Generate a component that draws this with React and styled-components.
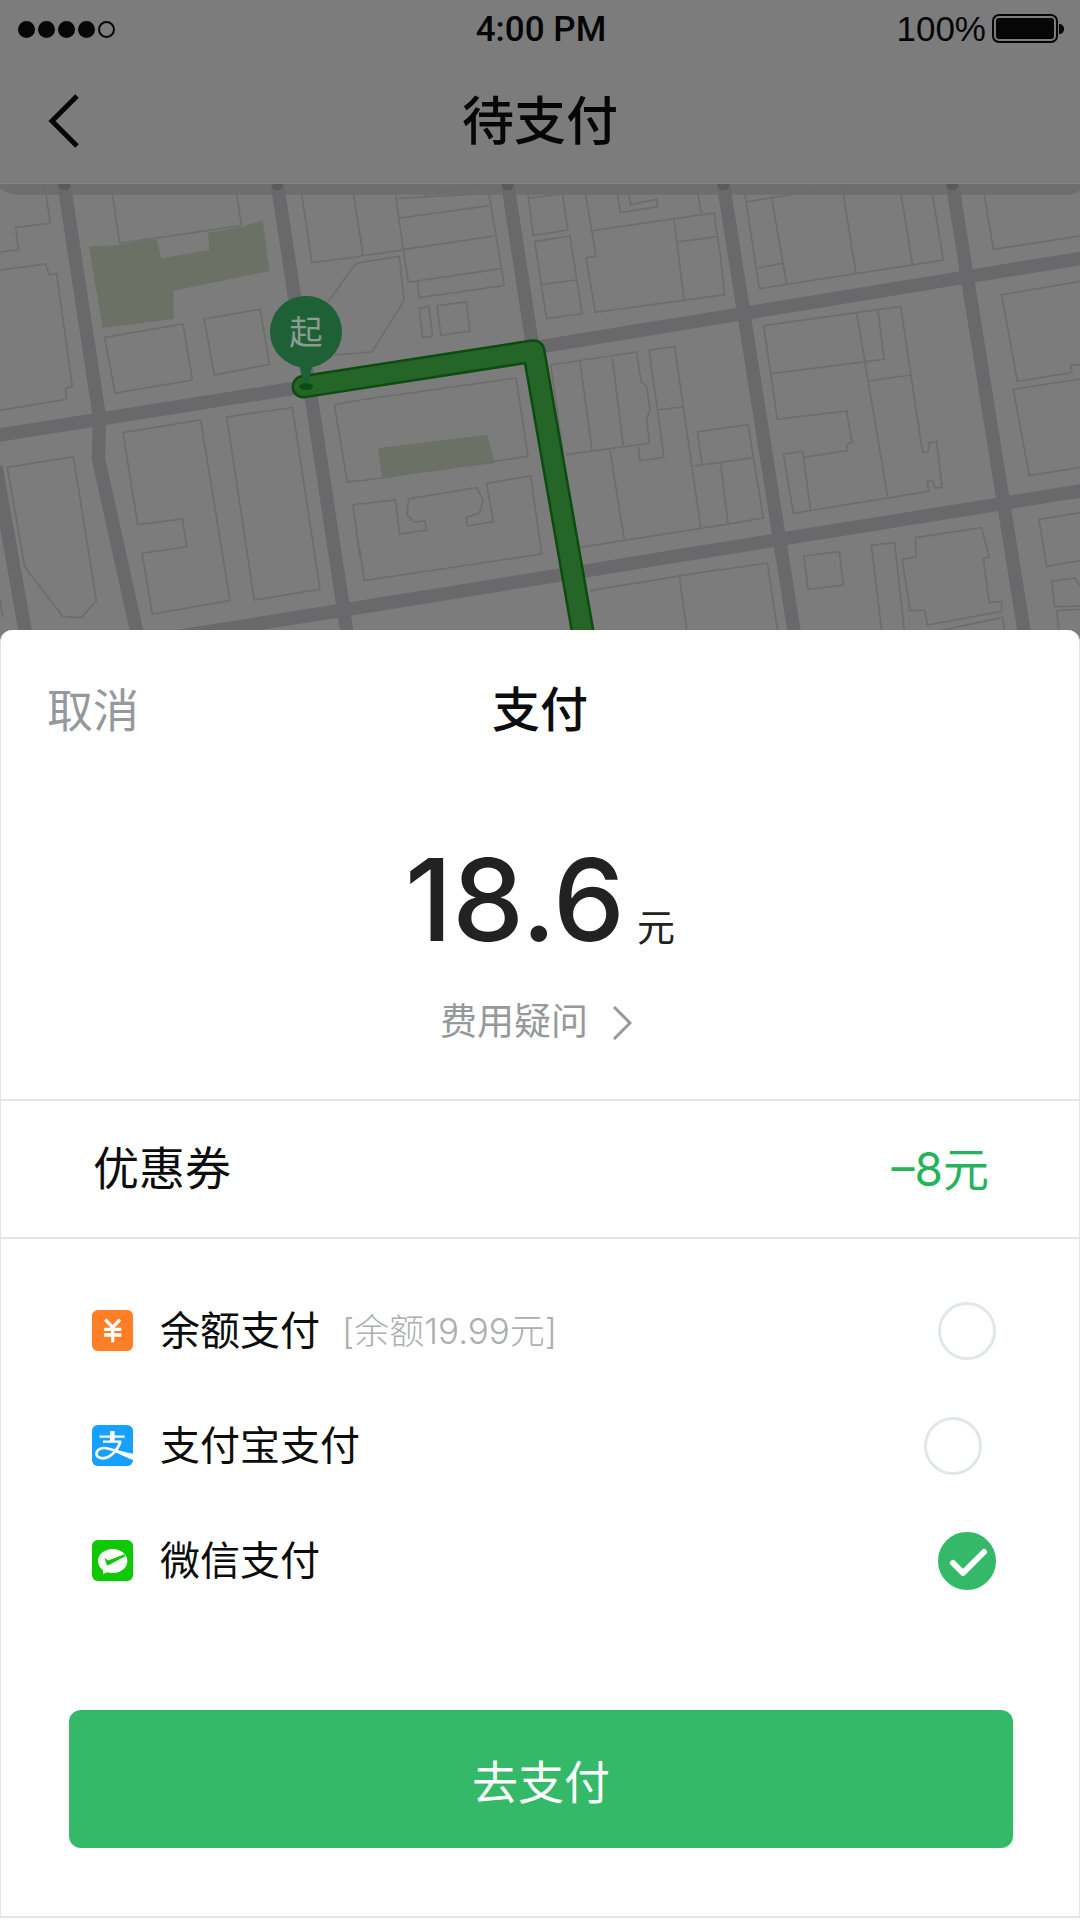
import * as React from "react"
import styled, { createGlobalStyle, ThemeProvider } from "styled-components";

const theme = {
  green: '#34b969',
  greenText: '#26b35d',
  text: '#0d0d0d',
  textMuted: '#96999b',
  textFaint: '#acafaf',
  line: '#e0e6e4',
  edge: '#e5e5e5',
  dimBackground: '#7c7c7c',
  dimText: '#060606',
}

const GlobalStyle = createGlobalStyle`
  *{
    box-sizing:border-box;
  }
  body{
    margin:0;
    background:#fff;
    font-family:"Liberation Sans", "Noto Sans CJK SC", sans-serif;
  }
  button{
    margin:0;
    padding:0;
    border:0;
    background:none;
    font-family:inherit;
    cursor:pointer;
  }
  svg{
    display:block;
  }
`

const Page = styled.div`
  display:flex;
  flex-direction:column;
  min-height:100vh;
  background:${({ theme }) => theme.dimBackground};
`

const Header = styled.header`
  color:${({ theme }) => theme.dimText};
  border-bottom:solid 1px #858585;
`

const StatusBar = styled.div`
  display:grid;
  grid-template-columns:1fr auto 1fr;
  align-items:center;
  height:56px;
  padding:2px 16px 0 18px;
  font-size:35px;
`

const Signal = styled.div`
  display:flex;
  gap:3px;
`

const Dot = styled.span`
  width:17px;
  height:17px;
  border:solid 2px ${({ theme }) => theme.dimText};
  border-radius:50%;
  background:${({ theme, $on }) => $on ? theme.dimText : 'transparent'};
`

const Time = styled.span`
  font-family:Roboto, sans-serif;
  font-weight:500;
`

const Power = styled.div`
  display:flex;
  align-items:center;
  justify-content:flex-end;
  gap:6px;
`

const NavBar = styled.nav`
  display:grid;
  grid-template-columns:1fr auto 1fr;
  align-items:center;
  height:127px;
  padding:4px 36px 0;

  h1{
    margin:0;
    font-size:52px;
    font-weight:500;
    line-height:64px;
  }
`

const BackButton = styled.button`
  width:56px;
  padding:0 12px;
  color:inherit;
`

const MapStyled = styled.section`
  height:458px;

  svg{
    width:100%;
    height:100%;
  }
`

const Sheet = styled.main`
  flex:1;
  display:flex;
  flex-direction:column;
  margin-top:-12px;
  padding-bottom:67px;
  color:${({ theme }) => theme.text};
  background:#fff;
  border:solid ${({ theme }) => theme.edge};
  border-width:0 1px;
  border-radius:12px 12px 0 0;
`

const SheetBar = styled.div`
  display:grid;
  grid-template-columns:1fr auto 1fr;
  align-items:center;
  height:156px;
  padding:6px 46px 0;

  h2{
    margin:0;
    font-size:48px;
    font-weight:500;
    line-height:64px;
  }
`

const CancelButton = styled.button`
  justify-self:start;
  color:${({ theme }) => theme.textMuted};
  font-size:46px;
  line-height:64px;
`

const Summary = styled.section`
  display:flex;
  flex-direction:column;
  align-items:center;
  padding:48px 0 50px;
  border-bottom:solid 2px ${({ theme }) => theme.line};
`

const Amount = styled.p`
  display:flex;
  align-items:baseline;
  gap:12px;
  margin:0;
  color:#222;

  strong{
    font-family:Inter, sans-serif;
    font-size:114px;
    font-weight:500;
    line-height:132px;
  }
  span{
    font-size:38px;
    line-height:52px;
  }
`

const FeeLink = styled.a`
  display:flex;
  align-items:center;
  gap:24px;
  margin-top:31px;
  padding-right:8px;
  color:${({ theme }) => theme.textMuted};
  font-size:37px;
  line-height:52px;
  text-decoration:none;
`

const Coupon = styled.section`
  display:flex;
  align-items:center;
  justify-content:space-between;
  height:138px;
  padding:0 90px 0 92px;
  border-bottom:solid 2px ${({ theme }) => theme.line};
  font-size:46px;
  line-height:64px;
`

const Discount = styled.span`
  color:${({ theme }) => theme.greenText};
  font-family:Inter, "Noto Sans CJK SC", sans-serif;
`

const Methods = styled.form`
  padding:34px 83px 92px 91px;
`

const MethodRow = styled.label`
  display:flex;
  align-items:center;
  height:115px;
  padding-right:${({ $inset }) => $inset ? '14px' : '0'};
  cursor:pointer;
`

const MethodName = styled.span`
  margin-left:27px;
  font-size:40px;
  line-height:56px;
`

const MethodNote = styled.span`
  margin-left:22px;
  color:${({ theme }) => theme.textFaint};
  font-family:Inter, "Noto Sans CJK SC", sans-serif;
  font-size:35px;
  font-weight:300;
  line-height:56px;
`

const RadioStyled = styled.span`
  display:grid;
  margin-left:auto;

  input, svg{
    grid-area:1 / 1;
    width:58px;
    height:58px;
  }
  input{
    appearance:none;
    margin:0;
    border:solid 3px #dfe8e6;
    border-radius:50%;
    &:checked{
      border-color:${({ theme }) => theme.green};
      background:${({ theme }) => theme.green};
    }
  }
  svg{
    pointer-events:none;
    visibility:hidden;
  }
  input:checked + svg{
    visibility:visible;
  }
`

const PayButton = styled.button`
  height:138px;
  margin:0 66px 0 68px;
  color:#fff;
  font-size:46px;
  background:${({ theme }) => theme.green};
  border-radius:12px;
`

const BottomEdge = styled.footer`
  height:4px;
  background:#fff;
  border-top:solid 2px ${({ theme }) => theme.edge};
`

const Battery = () => (
  <svg width="72" height="30" viewBox="0 0 72 30" aria-hidden="true">
    <rect x="1" y="1" width="64" height="27" rx="6" fill="none" stroke="#060606" strokeWidth="2" />
    <rect x="4" y="4" width="58" height="21" rx="3" fill="#060606" />
    <path d="M67 10c3 0 5 2 5 5s-2 5-5 5z" fill="#060606" />
  </svg>
)

const BackIcon = () => (
  <svg width="32" height="56" viewBox="0 0 32 56" fill="none" stroke="currentColor" strokeWidth="5" aria-hidden="true">
    <path d="M29 2L4 27L29 52" />
  </svg>
)

const ArrowIcon = () => (
  <svg width="20" height="34" viewBox="0 0 20 34" fill="none" stroke="currentColor" strokeWidth="3" aria-hidden="true">
    <path d="M2 1L18 17L2 33" />
  </svg>
)

const BalanceIcon = () => (
  <svg width="41" height="41" viewBox="0 0 123 123" aria-hidden="true">
    <rect width="123" height="123" rx="17" fill="#ff7f27" />
    <path d="M40 29L62 52L84 29M36 58H88M36 75H88M62 52V97" fill="none" stroke="#fff" strokeWidth="10" />
  </svg>
)

const AlipayIcon = () => (
  <svg width="41" height="41" viewBox="0 0 123 123" aria-hidden="true">
    <rect width="123" height="123" rx="17" fill="#16a0ff" />
    <path d="M23 35H98M33 50H88" fill="none" stroke="#fff" strokeWidth="7" />
    <path d="M61 18V50" fill="none" stroke="#fff" strokeWidth="14" />
    <path d="M85 50C80 70 58 99 32 100C6 100 8 72 34 69C50 68 66 76 80 82" fill="none" stroke="#fff" strokeWidth="8" />
    <path d="M52 69C76 74 98 83 123 86V105C102 97 84 89 66 79Z" fill="#fff" />
  </svg>
)

const WechatIcon = () => (
  <svg width="41" height="41" viewBox="0 0 123 123" aria-hidden="true">
    <rect width="123" height="123" rx="17" fill="#11c804" />
    <ellipse cx="62" cy="63" rx="44" ry="36" fill="#fff" />
    <path d="M32 86L34 102L52 94Z" fill="#fff" />
    <path d="M37 53L45 59Q49 62 54 59L98 43L101 48L51 75Q46 78 44 73Z" fill="#11c804" />
  </svg>
)

const Blocks = ({ x, d }) => (
  <path transform={`translate(${x} 0)`} d={d} fill="none" stroke="#6d6d6d" strokeWidth="5" />
)

const leftBlocks = `
  M133 12L151 130L47 142L55 210L0 216
  M0 270L137 252L147 284L170 282L217 619L197 626L199 658L0 691
  M333 12L359 190M359 190L724 137L706 12
  M314 472L549 432L577 600L345 639Z
  M612 417L780 388L809 553L643 585Z
  M22 862L220 830L289 1262L244 1313L188 1309L74 1160Z
  M369 758L602 720L690 1262L457 1302L426 1120L560 1100L547 1017L413 1034Z
  M680 711L877 682L960 1228L763 1260Z
  M900 12L936 248L1080 230
  M985 365L1066 252L1080 248M1005 525L1080 519
  M1056 12L1080 170
  M1080 660L1003 674L1042 906L1080 902
  M1080 970L1059 976L1080 1130
  M0 1260L8 1312`

const middleBlocks = `
  M0 228L130 210L102 12M0 160L8 224M112 55L388 40M120 114L388 77M132 208L402 168M130 210L145 307L422 266
  M382 12L433 317L178 353L172 305
  M0 248L118 229L132 362L36 515L0 519
  M190 46L380 12
  M178 385L206 379L218 468L188 473Z
  M231 377L319 366L330 453L243 466Z
  M500 12L520 166L624 150L602 12M505 55L605 42
  M524 185L630 168L666 401L560 416ZM546 314L648 300
  M672 12L708 228L678 234L706 397L1080 346
  M698 152L1062 99L1080 220M942 118L972 356M952 186L1070 170
  M766 12L782 98L893 80L890 58L812 74L802 12
  M1008 12L1024 100
  M0 660L468 594L504 829L0 903
  M0 972L106 960L119 1062L199 1051L195 1022L162 1026L141 1004L146 956L350 923L370 960L358 1000L318 1012L322 1038L400 1025L380 910L512 888L545 1122L12 1202L0 1110
  M572 555L830 516L843 605L860 620L870 690L860 715L868 790L618 824M572 555L610 820
  M660 545L696 810M757 532L790 800
  M867 510L944 500L1022 1042M867 510L912 832L840 842L835 800M892 690L968 681
  M750 812L793 1080M660 1102L1080 1036
  M1080 746L1012 756L1026 850M1000 858L1080 848
  M690 1232L1080 1168M958 1192L982 1360`

const rightBlocks = `
  M0 220L14 344L0 346
  M70 12L118 326L670 240L632 12M78 66L400 12M155 55L200 312M112 264L188 250
  M365 12L408 280M538 12L577 252
  M788 12L820 208L1080 168
  M1080 304L845 344L892 604L1056 578L1052 556L1080 554
  M1080 597L880 628L928 887L1080 862
  M131 437L542 379L608 818L624 816L628 788L650 785L666 922L646 924L638 902L622 904L626 934L220 1000L190 822L248 814L272 990
  M131 437L172 718L380 693L396 786L380 794L382 812L252 832
  M155 581L492 538L474 392M410 400L503 950M445 603L572 585
  M0 746L84 734L130 1014L0 1036M0 848L98 833M2 850L24 1030
  M0 1170L142 1149L174 1360
  M252 1128L358 1115L370 1215L264 1228Z
  M486 1360L454 1096L524 1087L554 1360
  M586 1073L784 1043L808 1130L790 1136L808 1268L844 1265L846 1294L622 1335L614 1290L570 1292L547 1138L588 1130Z
  M620 1360L848 1312L854 1360
  M1080 998L957 1018L980 1159L1080 1142
  M1080 1220L1064 1194L995 1204L1004 1280L1080 1278
  M1080 1288L1010 1292L1018 1360`

// One map unit is a third of a pixel
const RouteMap = () => (
  <MapStyled aria-label="行程路线">
    <svg viewBox="0 12 3240 1374" preserveAspectRatio="xMidYMin slice">
      <path d="M267 200L359 194L470 178L484 235L628 210L624 158L724 142L788 121L809 273L520 332L521 417L308 444Z" fill="#6b7265" />
      <path d="M1134 804L1462 765L1484 849L1146 892Z" fill="#6b7265" />
      <path d="M0 12H3240V30Q3225 44 3200 44H50Q15 40 0 24Z" fill="#6e6e6e" />
      <Blocks x={0} d={leftBlocks} />
      <Blocks x={1080} d={middleBlocks} />
      <Blocks x={2160} d={rightBlocks} />
      <g fill="none" stroke="#69696b" strokeWidth="40">
        <path d="M192 12L299 715L295 835L418 1390" />
        <path d="M832 12L885 360L935 660L1046 1390" />
        <path d="M1523 12L1598 500" />
        <path d="M2170 12L2388 1390" />
        <path d="M2857 12L3078 1390" />
        <path d="M-20 768L900 622L1640 497L2160 412L3260 232" />
        <path d="M540 1368L1080 1282L1700 1182L2160 1107L3260 930" />
        <path d="M-12 860L82 1390" />
      </g>
      <path d="M176 12h34v10l-8 8h-18l-8-8zM815 12h34v10l-8 8h-18l-8-8zM1506 12h34v10l-8 8h-18l-8-8zM2153 12h34v10l-8 8h-18l-8-8zM2840 12h34v10l-8 8h-18l-8-8z" fill="#5a5a5a" />
      <g fill="none" strokeLinecap="round" strokeLinejoin="round">
        <path d="M910 620L1601 513L1756 1400" stroke="#0c4c10" strokeWidth="71" />
        <path d="M910 620L1601 513L1756 1400" stroke="#256628" strokeWidth="56" />
      </g>
      <path d="M898 555H938L922 616H914Z" fill="#1e6136" />
      <ellipse cx="918" cy="620" rx="21" ry="10" fill="#0c4c10" />
      <circle cx="918" cy="455" r="108" fill="#1e6136" />
      <text x="918" y="491" textAnchor="middle" fontSize="100" fill="#8f9a92">起</text>
    </svg>
  </MapStyled>
)

const Radio = (props) => (
  <RadioStyled>
    <input type="radio" name="method" {...props} />
    <svg viewBox="0 0 58 58" fill="none" stroke="#fff" strokeWidth="6" strokeLinecap="round" strokeLinejoin="round" aria-hidden="true">
      <path d="M15 31L25 41L46 20" />
    </svg>
  </RadioStyled>
)

const methods = [
  { id: 'balance', name: '余额支付', note: '[余额19.99元]', Icon: BalanceIcon },
  { id: 'alipay', name: '支付宝支付', Icon: AlipayIcon, inset: true },
  { id: 'wechat', name: '微信支付', Icon: WechatIcon },
]

const App = () => {
  const [method, setMethod] = React.useState('wechat');

  return (
    <ThemeProvider theme={theme}>
      <GlobalStyle />
      <Page>
        <Header>
          <StatusBar>
            <Signal>
              {[1, 2, 3, 4, 5].map(n => <Dot key={n} $on={n < 5} />)}
            </Signal>
            <Time>4:00 PM</Time>
            <Power>100%<Battery /></Power>
          </StatusBar>
          <NavBar>
            <BackButton type="button" aria-label="返回"><BackIcon /></BackButton>
            <h1>待支付</h1>
          </NavBar>
        </Header>
        <RouteMap />
        <Sheet>
          <SheetBar>
            <CancelButton type="button">取消</CancelButton>
            <h2>支付</h2>
          </SheetBar>
          <Summary>
            <Amount><strong>18.6</strong><span>元</span></Amount>
            <FeeLink href="#fee">费用疑问<ArrowIcon /></FeeLink>
          </Summary>
          <Coupon>
            <span>优惠券</span>
            <Discount>–8元</Discount>
          </Coupon>
          <Methods>
            {methods.map(({ id, name, note, Icon, inset }) => (
              <MethodRow key={id} $inset={inset}>
                <Icon />
                <MethodName>{name}</MethodName>
                {note && <MethodNote>{note}</MethodNote>}
                <Radio value={id} checked={method === id} onChange={() => setMethod(id)} />
              </MethodRow>
            ))}
          </Methods>
          <PayButton type="button">去支付</PayButton>
        </Sheet>
        <BottomEdge />
      </Page>
    </ThemeProvider>
  )
}
export default App
